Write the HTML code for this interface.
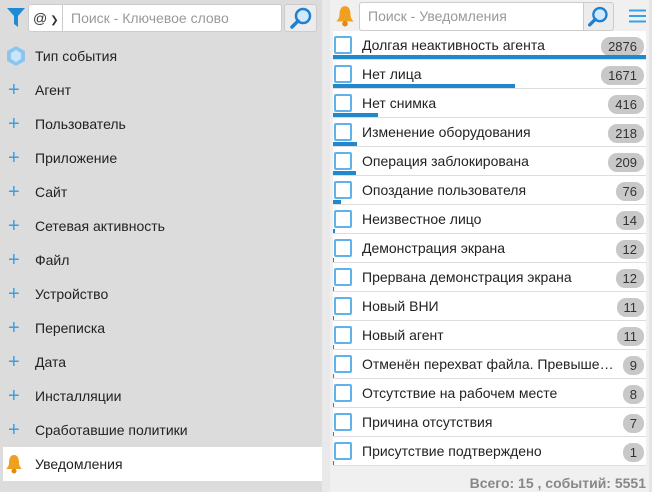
<!DOCTYPE html>
<html><head><meta charset="utf-8"><style>
*{box-sizing:border-box;margin:0;padding:0}
body{width:652px;height:492px;overflow:hidden;background:#f0f0f0;font-family:"Liberation Sans",Arial,sans-serif;font-size:14px;color:#222;position:relative}
.left{position:absolute;left:0;top:0;width:322px;height:492px;background:#dcdcdc}
.split{position:absolute;left:322px;top:0;width:8px;height:492px;background:#e9e9e9}
.rs{position:absolute;left:649px;top:0;width:3px;height:492px;background:#e4e4e4}
.inp{position:absolute;background:#fff;border:1px solid #ccc;border-radius:3px;color:#999;font-size:14px;line-height:26px;padding-left:8px}
.btn{position:absolute;background:#ececec;border:1px solid #ccc;border-radius:3px}
.li{position:absolute;left:0;width:322px;height:34px;line-height:34px}
.li .p{position:absolute;left:8px;color:#3a9ee0;font-size:20px}
.li .t{position:absolute;left:35px}
.row{position:absolute;left:333px;width:313px;height:29px;background:#fff;border-bottom:1px solid #ddd}
.cb{position:absolute;left:1px;top:5px;width:18px;height:18px;border:2px solid #5fb2ea;border-radius:2px}
.row .t{position:absolute;left:29px;top:1px;line-height:27px;white-space:nowrap}
.bd{position:absolute;right:2px;top:6px;height:19px;line-height:19px;background:#c8c8c8;border-radius:9px;font-size:13px;padding:0 7px;color:#333}
.bar{position:absolute;left:0;bottom:0;height:4px;background:#2288cc}
</style></head><body>
<div class="left"></div><div class="split"></div><div class="rs"></div>
<svg style="position:absolute;left:7px;top:8px" width="18" height="20" viewBox="0 0 18 20"><path d="M0 0H18L11 8V19L7 16V8Z" fill="#1e8ad6"/></svg>
<div class="inp" style="left:28px;top:4px;width:36px;height:28px;border-radius:3px 0 0 3px;color:#333;padding-left:4px">@<span style="font-size:10px;margin-left:3px">&#10095;</span></div>
<div class="inp" style="left:62px;top:4px;width:220px;height:28px;border-radius:0 3px 3px 0">Поиск - Ключевое слово</div>
<div class="btn" style="left:284px;top:4px;width:33px;height:28px"><svg width="31" height="26" viewBox="0 0 31 26"><circle cx="18" cy="11" r="7" fill="#cfeaff" stroke="#1f7fd0" stroke-width="2.5"/><path d="M13 16L7 22" stroke="#1f7fd0" stroke-width="3.5" stroke-linecap="round"/></svg></div>
<svg style="position:absolute;left:6px;top:45px" width="20" height="22" viewBox="0 0 20 22"><path d="M10 1L19 6V16L10 21L1 16V6Z" fill="#8cc6ee"/><path d="M10 5L15 8V14L10 17L5 14V8Z" fill="#c8e6fb"/></svg>
<div class="li" style="top:39px"><span class="t">Тип события</span></div>
<div class="li" style="top:73px"><span class="p">+</span><span class="t">Агент</span></div>
<div class="li" style="top:107px"><span class="p">+</span><span class="t">Пользователь</span></div>
<div class="li" style="top:141px"><span class="p">+</span><span class="t">Приложение</span></div>
<div class="li" style="top:175px"><span class="p">+</span><span class="t">Сайт</span></div>
<div class="li" style="top:209px"><span class="p">+</span><span class="t">Сетевая активность</span></div>
<div class="li" style="top:243px"><span class="p">+</span><span class="t">Файл</span></div>
<div class="li" style="top:277px"><span class="p">+</span><span class="t">Устройство</span></div>
<div class="li" style="top:311px"><span class="p">+</span><span class="t">Переписка</span></div>
<div class="li" style="top:345px"><span class="p">+</span><span class="t">Дата</span></div>
<div class="li" style="top:379px"><span class="p">+</span><span class="t">Инсталляции</span></div>
<div class="li" style="top:413px"><span class="p">+</span><span class="t">Сработавшие политики</span></div>
<div class="li" style="top:447px;left:3px;width:319px;background:#fff"><span class="t" style="left:32px">Уведомления</span>
<svg style="position:absolute;left:2px;top:7px" width="18" height="20" viewBox="0 0 18 20"><path d="M9 1C5 1 4 5 4 9C4 12 2 14 1 15H17C16 14 14 12 14 9C14 5 13 1 9 1Z" fill="#f0a020"/><circle cx="9" cy="17" r="2.5" fill="#e08a10"/></svg></div>
<svg style="position:absolute;left:335px;top:5px" width="20" height="22" viewBox="0 0 18 20"><path d="M9 1C5 1 4 5 4 9C4 12 2 14 1 15H17C16 14 14 12 14 9C14 5 13 1 9 1Z" fill="#f0a020"/><circle cx="9" cy="17" r="2.5" fill="#e08a10"/></svg>
<div class="inp" style="left:359px;top:2px;width:225px;height:29px;border-radius:3px 0 0 3px;line-height:27px">Поиск - Уведомления</div>
<div class="btn" style="left:583px;top:2px;width:31px;height:29px;border-radius:0 3px 3px 0"><svg width="29" height="27" viewBox="0 0 31 26"><circle cx="17" cy="11" r="7" fill="#cfeaff" stroke="#1f7fd0" stroke-width="2.5"/><path d="M12 16L6 22" stroke="#1f7fd0" stroke-width="3.5" stroke-linecap="round"/></svg></div>
<svg style="position:absolute;left:629px;top:9px" width="17" height="14"><path d="M0 1.5H17M0 7H17M0 12.5H17" stroke="#3aa0e4" stroke-width="2"/></svg>

<div class="row" style="top:31px"><div class="cb"></div><span class="t">Долгая неактивность агента</span><span class="bd">2876</span><div class="bar" style="width:313px"></div></div>
<div class="row" style="top:60px"><div class="cb"></div><span class="t">Нет лица</span><span class="bd">1671</span><div class="bar" style="width:182px"></div></div>
<div class="row" style="top:89px"><div class="cb"></div><span class="t">Нет снимка</span><span class="bd">416</span><div class="bar" style="width:45px"></div></div>
<div class="row" style="top:118px"><div class="cb"></div><span class="t">Изменение оборудования</span><span class="bd">218</span><div class="bar" style="width:24px"></div></div>
<div class="row" style="top:147px"><div class="cb"></div><span class="t">Операция заблокирована</span><span class="bd">209</span><div class="bar" style="width:23px"></div></div>
<div class="row" style="top:176px"><div class="cb"></div><span class="t">Опоздание пользователя</span><span class="bd">76</span><div class="bar" style="width:8px"></div></div>
<div class="row" style="top:205px"><div class="cb"></div><span class="t">Неизвестное лицо</span><span class="bd">14</span><div class="bar" style="width:2px"></div></div>
<div class="row" style="top:234px"><div class="cb"></div><span class="t">Демонстрация экрана</span><span class="bd">12</span><div class="bar" style="width:1px"></div></div>
<div class="row" style="top:263px"><div class="cb"></div><span class="t">Прервана демонстрация экрана</span><span class="bd">12</span><div class="bar" style="width:1px"></div></div>
<div class="row" style="top:292px"><div class="cb"></div><span class="t">Новый ВНИ</span><span class="bd">11</span><div class="bar" style="width:1px"></div></div>
<div class="row" style="top:321px"><div class="cb"></div><span class="t">Новый агент</span><span class="bd">11</span><div class="bar" style="width:1px"></div></div>
<div class="row" style="top:350px"><div class="cb"></div><span class="t" style="width:256px;overflow:hidden;text-overflow:ellipsis">Отменён перехват файла. Превышен размер</span><span class="bd">9</span><div class="bar" style="width:1px"></div></div>
<div class="row" style="top:379px"><div class="cb"></div><span class="t">Отсутствие на рабочем месте</span><span class="bd">8</span><div class="bar" style="width:1px"></div></div>
<div class="row" style="top:408px"><div class="cb"></div><span class="t">Причина отсутствия</span><span class="bd">7</span><div class="bar" style="width:1px"></div></div>
<div class="row" style="top:437px"><div class="cb"></div><span class="t">Присутствие подтверждено</span><span class="bd">1</span><div class="bar" style="width:1px"></div></div>
<div style="position:absolute;right:6px;top:475px;font-weight:bold;color:#888;font-size:14px">Всего: 15 , событий: 5551</div>
</body></html>
